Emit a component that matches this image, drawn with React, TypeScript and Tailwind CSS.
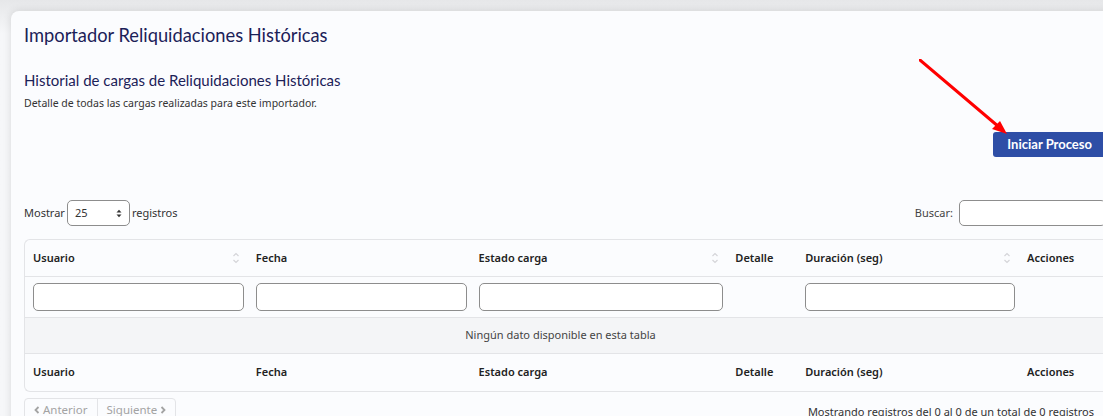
import React from "react";

const columns = [
  { label: "Usuario", w: "w-[223px]", sort: true, filter: true },
  { label: "Fecha", w: "w-[223px]", sort: false, filter: true },
  { label: "Estado carga", w: "w-[257px]", sort: true, filter: true },
  { label: "Detalle", w: "w-[70px]", sort: false, filter: false },
  { label: "Duración (seg)", w: "w-[222px]", sort: true, filter: true },
  { label: "Acciones", w: "w-[87px]", sort: false, filter: false },
];

function SortIcon() {
  return (
    <svg width="8" height="14" viewBox="0 0 8 14" className="shrink-0">
      <path d="M1.5 5 L4 2.5 L6.5 5" fill="none" stroke="#d4d4d8" strokeWidth="1.2" />
      <path d="M1.5 9 L4 11.5 L6.5 9" fill="none" stroke="#d4d4d8" strokeWidth="1.2" />
    </svg>
  );
}

function HeaderRow({ withSort, border }: { withSort: boolean; border: string }) {
  return (
    <div className={`flex h-[37px] items-center ${border}`}>
      {columns.map((c) => (
        <div key={c.label} className={`${c.w} flex items-center justify-between pl-2 pr-[8px] text-[11px] font-semibold text-[#222]`}>
          <span>{c.label}</span>
          {withSort && c.sort ? <SortIcon /> : null}
        </div>
      ))}
    </div>
  );
}

export default function App() {
  return (
    <div className="relative h-[416px] w-[1103px] overflow-hidden bg-[#f2f3f5] bg-gradient-to-b from-[#e6e7e9] to-[#f6f7f9] to-[8%] font-['Noto_Sans',sans-serif]">
      <div className="ml-[11px] mt-[11px] w-[1110px] rounded-tl-lg bg-[#fbfcfe] pb-6 pl-[13px] pr-[4px] pt-[13px] shadow-[0_0_8px_rgba(0,0,0,0.12)]">
        <h1 className="font-['Lato',sans-serif] text-[18.3px] leading-[22px] text-[#1b2158]">Importador Reliquidaciones Históricas</h1>

        <h2 className="mt-[25px] font-['Lato',sans-serif] text-[15px] leading-[18px] text-[#1b2158]">Historial de cargas de Reliquidaciones Históricas</h2>
        <p className="mt-[7px] text-[10.5px] leading-[14px] text-[#333]">Detalle de todas las cargas realizadas para este importador.</p>

        <div className="relative mt-[22px] w-[1082px] flex justify-end">
          <button className="h-[25px] rounded-[3px] bg-[#2e4ea6] px-[14px] font-['Lato',sans-serif] text-[13px] font-bold text-white">Iniciar Proceso</button>
          <svg className="absolute left-[895px] top-[-73px]" width="100" height="90" viewBox="0 0 100 90">
            <line x1="1" y1="1" x2="80" y2="68" stroke="#ff0000" strokeWidth="3" strokeLinecap="round" />
            <path d="M88 75 L73 70 L81 62 Z" fill="#ff0000" />
          </svg>
        </div>

        <div className="mt-[43px] flex w-[1082px] items-center justify-between text-[11px] text-[#333]">
          <div className="flex items-center gap-[2px]">
            <span>Mostrar</span>
            <div className="flex h-[26px] w-[63px] items-center justify-between rounded-[5px] border border-[#8d8d8d] bg-white px-[7px]">
              <span>25</span>
              <svg width="6" height="9" viewBox="0 0 6 9">
                <path d="M0.5 3.5 L3 0.8 L5.5 3.5 Z" fill="#333" />
                <path d="M0.5 5.5 L3 8.2 L5.5 5.5 Z" fill="#333" />
              </svg>
            </div>
            <span>registros</span>
          </div>
          <div className="flex items-center gap-[6px]">
            <span className="text-[#444]">Buscar:</span>
            <div className="h-[26px] w-[147px] rounded-[5px] border border-[#8d8d8d] bg-white" />
          </div>
        </div>

        <div className="mt-[13px] w-[1082px] rounded-l-md border border-r-0 border-[#e3e4e7]">
          <HeaderRow withSort border="border-b border-[#e3e4e7]" />
          <div className="flex h-[41px] items-center border-b border-[#e3e4e7]">
            {columns.map((c) => (
              <div key={c.label} className={`${c.w} pl-2 pr-1`}>
                {c.filter ? <div className="h-[28px] rounded-[5px] border border-[#8d8d8d] bg-white" /> : null}
              </div>
            ))}
          </div>
          <div className="flex h-[36px] items-center justify-center border-b border-[#e3e4e7] bg-[#f4f5f7] pr-[10px] text-[11px] text-[#444]">
            Ningún dato disponible en esta tabla
          </div>
          <HeaderRow withSort={false} border="" />
        </div>

        <div className="mt-[6px] flex w-[1082px] items-start justify-between text-[11px]">
          <div className="flex h-[24px] rounded-[4px] border border-[#e3e4e7] text-[11.5px] text-[#a3a3a3]">
            <span className="flex items-center gap-[3px] border-r border-[#e3e4e7] px-[9px]">
              <svg width="6" height="8" viewBox="0 0 6 8"><path d="M4.5 1 L1.5 4 L4.5 7" fill="none" stroke="#a3a3a3" strokeWidth="1.8" /></svg>
              Anterior
            </span>
            <span className="flex items-center gap-[3px] px-[9px]">
              Siguiente
              <svg width="6" height="8" viewBox="0 0 6 8"><path d="M1.5 1 L4.5 4 L1.5 7" fill="none" stroke="#a3a3a3" strokeWidth="1.8" /></svg>
            </span>
          </div>
          <span className="mr-[12px] mt-[6px] text-[#333]">Mostrando registros del 0 al 0 de un total de 0 registros</span>
        </div>
      </div>
    </div>
  );
}
